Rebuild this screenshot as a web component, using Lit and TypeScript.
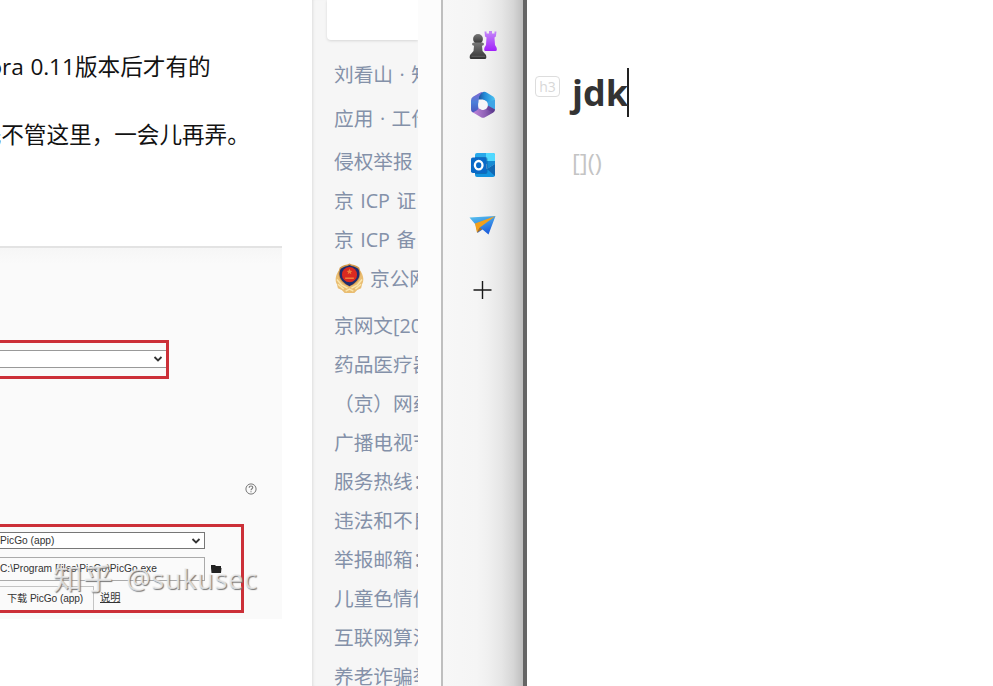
import { LitElement, html, css, svg } from "lit";
import { customElement } from "lit/decorators.js";

const chevron = html`<svg class="chev" width="10" height="8" viewBox="0 0 10 8"><path d="M1.5 2 5 5.500 8.500 2" fill="none" stroke="#333" stroke-width="1.800"/></svg>`;

@customElement("article-pane")
class ArticlePane extends LitElement {
  static styles = css`
    :host { display: block; width: 312px; height: 686px; overflow: hidden; background: #fff;
      font-family: "Open Sans", "Noto Sans CJK SC", sans-serif; color: #121212; }
    .line { display: flex; justify-content: flex-end; height: 34px; line-height: 34px; font-size: 22.6px; white-space: pre; font-weight: 400; }
    .line i { font-style: normal; letter-spacing: -0.1px; word-spacing: 1px; margin-right: .3px; }
    .first { width: 210.6px; margin-top: 50px; }
    .second { width: 249.8px; margin-top: 34px; }
    .figure { position: relative; box-sizing: border-box; width: 282px; height: 373px; margin-top: 94px;
      border-top: 2px solid #e3e3e3; background: linear-gradient(#f6f6f6, #fafafa 16px); overflow: hidden;
      font: 10.2px/16px "Liberation Sans", "Noto Sans CJK SC", sans-serif; color: #333; padding-top: 92px; }
    .box { box-sizing: border-box; border: 3px solid #cc3038; border-left: 0; }
    .one { width: 169px; height: 39px; padding-top: 7px; }
    .field { box-sizing: border-box; display: flex; align-items: center; justify-content: space-between; border: 1px solid #777; border-left: 0; background: #fff; white-space: pre; padding-right: 3px; }
    .one .field { height: 18px; border-color: #999; border-right: 0; }
    .help { display: block; margin: 104px 0 0 245px; }
    .two { width: 244px; height: 89px; margin-top: 29px; padding-top: 5px; }
    .app { width: 205px; height: 17px; line-height: 14px; }
    .row { display: flex; align-items: center; margin-top: 8px; gap: 6px; }
    .path { width: 205px; height: 24px; border-color: #aaa; background: #fafafa; }
    .last { margin-top: 5px; align-items: stretch; height: 24px; line-height: 23px; white-space: pre; }
    .btn { box-sizing: border-box; width: 94px; padding-left: 7px; border: 1px solid #c4c4c4; border-width: 1px 1px 0 0; letter-spacing: -.1px; }
    .link { text-decoration: underline; text-underline-offset: 1px; }
    .mark { position: absolute; left: 53px; top: 310px; font: 27px/40px "Open Sans", "Noto Sans CJK SC", sans-serif;
      color: rgba(240,240,240,.8); text-shadow: 1px 1px 1px #777; white-space: pre; letter-spacing: .75px; word-spacing: 5px; }
    .mark b { font-weight: 400; font-size: 29.500px; }
  `;
  render() {
    return html`
      <div class="line first"><i>Typora 0.11</i>版本后才有的</div>
      <div class="line second">先不管这里，一会儿再弄。</div>
      <div class="figure">
        <div class="box one"><div class="field"><span></span>${chevron}</div></div>
        <svg class="help" width="12" height="12" viewBox="0 0 12 12"><circle cx="6" cy="6" r="5.1" fill="none" stroke="#777"/><path d="M4.2 4.7C4.2 2.3 7.8 2.4 7.8 4.6 7.8 5.8 6 5.8 6 7.3M6 8.2v1.1" fill="none" stroke="#777" stroke-width="1.1"/></svg>
        <div class="box two">
          <div class="field app">PicGo (app)${chevron}</div>
          <div class="row"><div class="field path">C:\\Program Files\\PicGo\\PicGo.exe</div>
            <svg width="11" height="11" viewBox="0 0 11 11"><path d="M0 1h4l1 1h5v2H0zM0 4h10.500L10 9H0.500z" fill="#222"/></svg></div>
          <div class="row last"><span class="btn">下载 PicGo (app)</span><span class="link">说明</span></div>
        </div>
        <div class="mark"><b>知乎</b> @sukusec</div>
      </div>`;
  }
}

@customElement("footer-links")
class FooterLinks extends LitElement {
  static styles = css`
    :host { display: block; box-sizing: border-box; width: 106px; height: 686px; overflow: hidden; background: #f6f6f6;
      box-shadow: inset 3px 0 3px -2px #ddd; font-family: "Open Sans", "Noto Sans CJK SC", sans-serif; color: #8491a9; }
    .card { height: 40px; margin-left: 15px; background: #fff; border-radius: 0 0 0 4px; box-shadow: 0 1px 3px rgba(0,0,0,.13); }
    .links { padding: 14px 0 0 22px; }
    .link { display: flex; align-items: center; height: 39px; font-size: 19.7px; white-space: pre; word-spacing: 1.4px; }
    .link svg { margin: 1px 6px 0 1px; flex: none; }
    .g5 { margin-top: 5px; } .g4 { margin-top: 4px; } .g8 { margin-top: 8px; }
  `;
  render() {
    const badge = svg`<svg width="29" height="31" viewBox="0 0 30 32">
      <path d="M4 8C0 13 0 19 2 22l1 4 4 2 3 3h10l3-3 4-2 1-4c2-3 2-9-2-14z" fill="#e9bd72"/>
      <path d="M2 17l5 6 6 3M3 22l6 5M28 17l-5 6-6 3M27 22l-6 5M11 29l4-2 4 2" stroke="#fbe6ac" stroke-width="1.500" fill="none"/>
      <path d="M15 .5c3 1.500 7 1.500 10 4 1 3 2 5 1 9-1 6-6 9-11 11C10 22.500 5 19.500 4 13.500c-1-4 0-6 1-9 3-2.500 7-2.500 10-4z" fill="#d49a4a"/>
      <path d="M15 2c3 1.500 6 1.500 9 4 1 2 2 5 1 8-1 4-5.500 8-10 10-4.500-2-9-6-10-10-1-3 0-6 1-8 3-2.500 6-2.500 9-4z" fill="#202c6d"/>
      <circle cx="15" cy="12" r="7.800" fill="#da2a21"/><path d="M15 6l1 2 2 .2-1.600 1.300.5 2-1.900-1.100-1.900 1.100.5-2L12 8.200l2-.2zM10.500 15h9v1.500h-9z" fill="#ee7e3b"/></svg>`;
    const rows: [string, string][] = [
      ["刘看山 · 知乎指南", ""], ["应用 · 工作", "g5"], ["侵权举报", "g4"], ["京 ICP 证", ""], ["京 ICP 备", ""],
      ["京公网安备", ""], ["京网文[2022]", "g8"], ["药品医疗器械", ""], ["（京）网药械", ""], ["广播电视节目", ""],
      ["服务热线：400", ""], ["违法和不良信息", ""], ["举报邮箱：jubao", ""], ["儿童色情信息", ""], ["互联网算法", ""], ["养老诈骗举报", ""]];
    return html`<div class="card"></div><div class="links">
      ${rows.map(([t, c], i) => html`<div class="link ${c}">${i === 5 ? badge : ""}${t}</div>`)}</div>`;
  }
}

@customElement("browser-rail")
class BrowserRail extends LitElement {
  static styles = css`
    :host { box-sizing: border-box; display: flex; flex-direction: column; align-items: center; width: 86px; height: 686px; padding: 30px 1px 0 0;
      border-left: 2px solid #bfbfbf; border-right: 4px solid #656565;
      background: linear-gradient(90deg, #f7f7f7 0%, #f5f5f5 42%, #f0f0f0 56%, #e6e6e6 73%, #d6d6d6 88%, #bebebe 100%); }
    svg { width: 30px; height: 30px; margin-bottom: 30px; flex: none; }
    .plus { margin-top: 5px; }
  `;
  render() {
    return html`
      <svg viewBox="0 0 30 30">
        <defs><linearGradient id="p" x2="0" y2="1"><stop stop-color="#777"/><stop offset="1" stop-color="#333"/></linearGradient>
        <linearGradient id="r" x2="0" y2="1"><stop stop-color="#c58af8"/><stop offset="1" stop-color="#a020fa"/></linearGradient></defs>
        <path d="M16.500 1.500h2v2H21V1h3v2.500h2.500v-2h2l-.6 5-1.400 1 .5 7.500 1.500 2.500q1 3.500-1 3.500h-10q-2 0-1-3.500L18 15l.5-7.500-1.500-1z" fill="url(#r)"/>
        <circle cx="10" cy="9" r="4.900" fill="url(#p)"/><path d="M4 14q0-1.500 2-1.500h8q2 0 2 1.500t-2 1.800l.5 5.200 3.500 4q1 4-1 4H3q-2 0-1-4l3.500-4 .5-5.200Q4 15.500 4 14z" fill="url(#p)"/>
        <path d="M3.500 26.300H17" stroke="#777" stroke-width=".6"/>
      </svg>
      <svg viewBox="0 0 30 30">
        <defs><linearGradient id="a" x2="0" y2="1"><stop stop-color="#8266d0"/><stop offset=".5" stop-color="#4b7fd9"/><stop offset="1" stop-color="#4a55bd"/></linearGradient>
        <linearGradient id="b"><stop stop-color="#1f4a94"/><stop offset=".4" stop-color="#248bd8"/><stop offset="1" stop-color="#4cc4f2"/></linearGradient>
        <linearGradient id="c"><stop stop-color="#c58be0"/><stop offset=".6" stop-color="#8e60b5"/><stop offset="1" stop-color="#593688"/></linearGradient></defs>
        <path d="M15 2q2-.5 4 .8l6.500 4Q27 8 27 10v10L19 15.500V12l-4-2.500H10L11 4z" fill="url(#b)"/>
        <path d="M3 19.500q0 2 2 3l8 4.700q2 1 4 0l8-4.500q2-1.200 2-3.200V19L20 15l-5 5-5-2-5 3z" fill="url(#c)"/>
        <path d="M27 10v9q0 2-2 3.500L18 19l2-5z" fill="#5b3a92" opacity=".55"/>
        <path d="M15 2q-2 0-4 1.200L5 6.800Q3 8 3 10.500v9q0 2 2 3l3.500-2q2-1 2-3v-6q0-7 4.500-9.500z" fill="url(#a)"/>
        <path d="M27 10v9.500L19 15v-3z" fill="#3fa5e6"/>
        <circle cx="15" cy="15" r="4.900" fill="#f5f5f8"/>
      </svg>
      <svg viewBox="0 0 30 30">
        <path d="M9 3h16q2 0 2 2v9H7V5q0-2 2-2z" fill="#28a8ea"/><path d="M18 3h7q2 0 2 2v6h-9z" fill="#50d9ff"/>
        <path d="M7 8h10v7H7z" fill="#0364b8"/><path d="M19 11h8v3l-8 5z" fill="#178ad3"/>
        <path d="M7 14l12 5 8-5v11q0 2-2 2H9q-2 0-2-2z" fill="#1494df"/><path d="M27 14v12L19 19z" fill="#1167b2"/>
        <path d="M19.500 9v13q0 2-2 2H7V7h10.500q2 0 2 2z" fill="#0a4887" opacity=".45"/>
        <rect x="3" y="7.500" width="15.500" height="15.500" rx="1.800" fill="#0a69c7"/><ellipse cx="10.700" cy="15.200" rx="3.800" ry="4.200" fill="none" stroke="#fff" stroke-width="2.300"/>
      </svg>
      <svg viewBox="0 0 30 30">
        <defs><linearGradient id="t" x2=".4" y2="1"><stop stop-color="#5ac6ef"/><stop offset="1" stop-color="#1e61dd"/></linearGradient></defs>
        <path d="M1.500 7.500 27.500 6 20.500 24.500 14.500 19.500 9.500 23 7.500 14.500z" fill="url(#t)"/>
        <path d="M27.500 6 7 13.500l2 9.300 2.500-5z" fill="#f3a01b"/><path d="M11.500 17.800 9 22.800l5-3.800z" fill="#b96d10"/>
      </svg>
      <svg class="plus" viewBox="0 0 30 30"><path d="M5.500 15h18M14.500 6v18" stroke="#181818" stroke-width="1.400"/></svg>`;
  }
}

@customElement("editor-pane")
class EditorPane extends LitElement {
  static styles = css`
    :host { display: block; flex: 1; height: 686px; background: #fff; font-family: "Open Sans", sans-serif; }
    .head { display: flex; align-items: flex-start; padding: 68px 0 0 8px; }
    .tag { box-sizing: border-box; width: 25px; height: 21px; margin: 8px 12px 0 0; border: 1px solid #ddd; border-radius: 4px; font-size: 14px; line-height: 20px; text-align: center; color: #d8d8d8; }
    .title { font-size: 36px; line-height: 49px; font-weight: 700; color: #333; border-right: 2px solid #222; height: 49px; width: 55px; white-space: nowrap; }
    .sub { margin: 29px 0 0 45px; font-size: 24px; line-height: 32px; color: #c4c4c4; }
  `;
  render() {
    return html`<div class="head"><span class="tag">h3</span><span class="title">jdk</span></div><div class="sub">[]()</div>`;
  }
}

@customElement("app-root")
class AppRoot extends LitElement {
  static styles = css`
    :host { display: flex; width: 993px; height: 686px; overflow: hidden; background: #fff; }
    article-pane, footer-links, browser-rail, .scroll { flex: none; }
    .scroll { width: 23px; background: #fcfcfc; }
  `;
  render() {
    return html`<article-pane></article-pane><footer-links></footer-links><div class="scroll"></div><browser-rail></browser-rail><editor-pane></editor-pane>`;
  }
}
